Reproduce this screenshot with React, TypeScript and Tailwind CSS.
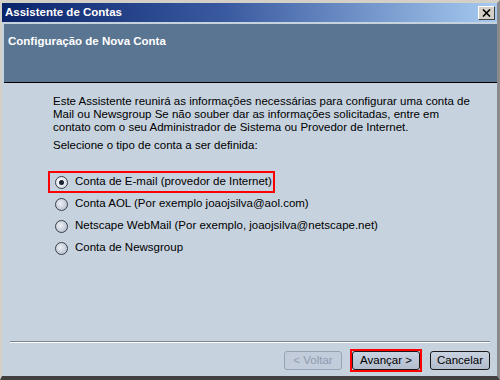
import React from 'react';

const options = [
  { label: 'Conta de E-mail (provedor de Internet)', checked: true },
  { label: 'Conta AOL (Por exemplo joaojsilva@aol.com)', checked: false },
  { label: 'Netscape WebMail (Por exemplo, joaojsilva@netscape.net)', checked: false },
  { label: 'Conta de Newsgroup', checked: false },
];

function Radio({ checked }: { checked: boolean }) {
  return (
    <span
      className={
        'flex h-[13px] w-[13px] items-center justify-center rounded-full border border-[#3a3f4a] ' +
        (checked
          ? 'bg-[radial-gradient(circle_at_40%_40%,#ffffff,#c9d2de)]'
          : 'bg-[radial-gradient(circle_at_40%_40%,#eef1f5,#aab6c6)]')
      }
    >
      {checked && <span className="h-[5px] w-[5px] rounded-full bg-[#1c2230]" />}
    </span>
  );
}

export default function App() {
  return (
    <div
      className="flex h-[380px] w-[500px] flex-col border-t-[3px] border-l-[2px] border-r-[3px] border-b-[4px] border-t-[#d4d0c8] border-l-[#d4d0c8] border-r-[#8a8a8a] border-b-[#404040] bg-[#c6d2de] text-[11.5px] text-black"
      style={{ fontFamily: '"Liberation Sans", Arial, sans-serif' }}
    >
      {/* title bar */}
      <div className="flex h-[19px] items-center justify-between bg-[linear-gradient(to_right,#0a246a,#3a5aa0_45%,#a6caf0)] pl-[3px] pr-[2px]">
        <span className="text-[11.5px] font-bold leading-none text-white">Assistente de Contas</span>
        <button className="flex h-[14px] w-[17px] items-center justify-center border border-t-white border-l-white border-r-[#404040] border-b-[#404040] bg-[#d4d0c8]">
          <svg width="9" height="8" viewBox="0 0 9 8">
            <path d="M1 0.5 L8 7.5 M8 0.5 L1 7.5" stroke="#000" strokeWidth="1.6" />
          </svg>
        </button>
      </div>

      {/* header */}
      <div className="mt-[2px] ml-[2px] h-[59px] border-b border-black bg-[#5a7591] px-[4px] pt-[9px]">
        <span className="text-[11.5px] font-bold text-white">Configuração de Nova Conta</span>
      </div>

      {/* body */}
      <div className="flex flex-1 flex-col">
        <div className="pl-[51px] pt-[12px] leading-[13px]">
          <p>
            Este Assistente reunirá as informações necessárias para configurar uma conta de
            <br />
            Mail ou Newsgroup Se não souber dar as informações solicitadas, entre em
            <br />
            contato com o seu Administrador de Sistema ou Provedor de Internet.
          </p>
          <p className="mt-[5px]">Selecione o tipo de conta a ser definida:</p>
        </div>

        <div className="mt-[19px] flex flex-col pl-[46px]">
          {options.map((o) => (
            <div
              key={o.label}
              className={
                'flex h-[22px] w-fit items-center gap-[7px] ' +
                (o.checked ? 'border-2 border-[#ff0000] pl-[5px] pr-[1px]' : 'pl-[7px] pr-[3px]')
              }
            >
              <Radio checked={o.checked} />
              <span>{o.label}</span>
            </div>
          ))}
        </div>

        <div className="flex-1" />

        {/* separator */}
        <div className="ml-[8px] mr-[7px] border-t border-b border-t-[#7a8594] border-b-white" />

        {/* buttons */}
        <div className="flex items-center justify-end gap-[8px] pr-[7px] pt-[6px] pb-[4px]">
          <button className="h-[19px] w-[58px] rounded-[3px] border border-[#98a4b6] bg-[#c2ccda] text-[#8e9bb0]">
            &lt; Voltar
          </button>
          <span className="border-2 border-[#ff0000]">
            <button className="block h-[19px] w-[68px] rounded-[3px] border border-[#1a1a1a] bg-[linear-gradient(#c9d2df,#b1bccd)]">
              Avançar &gt;
            </button>
          </span>
          <button className="h-[19px] w-[60px] rounded-[3px] border border-[#1a1a1a] bg-[linear-gradient(#c9d2df,#b1bccd)]">
            Cancelar
          </button>
        </div>
      </div>
    </div>
  );
}
